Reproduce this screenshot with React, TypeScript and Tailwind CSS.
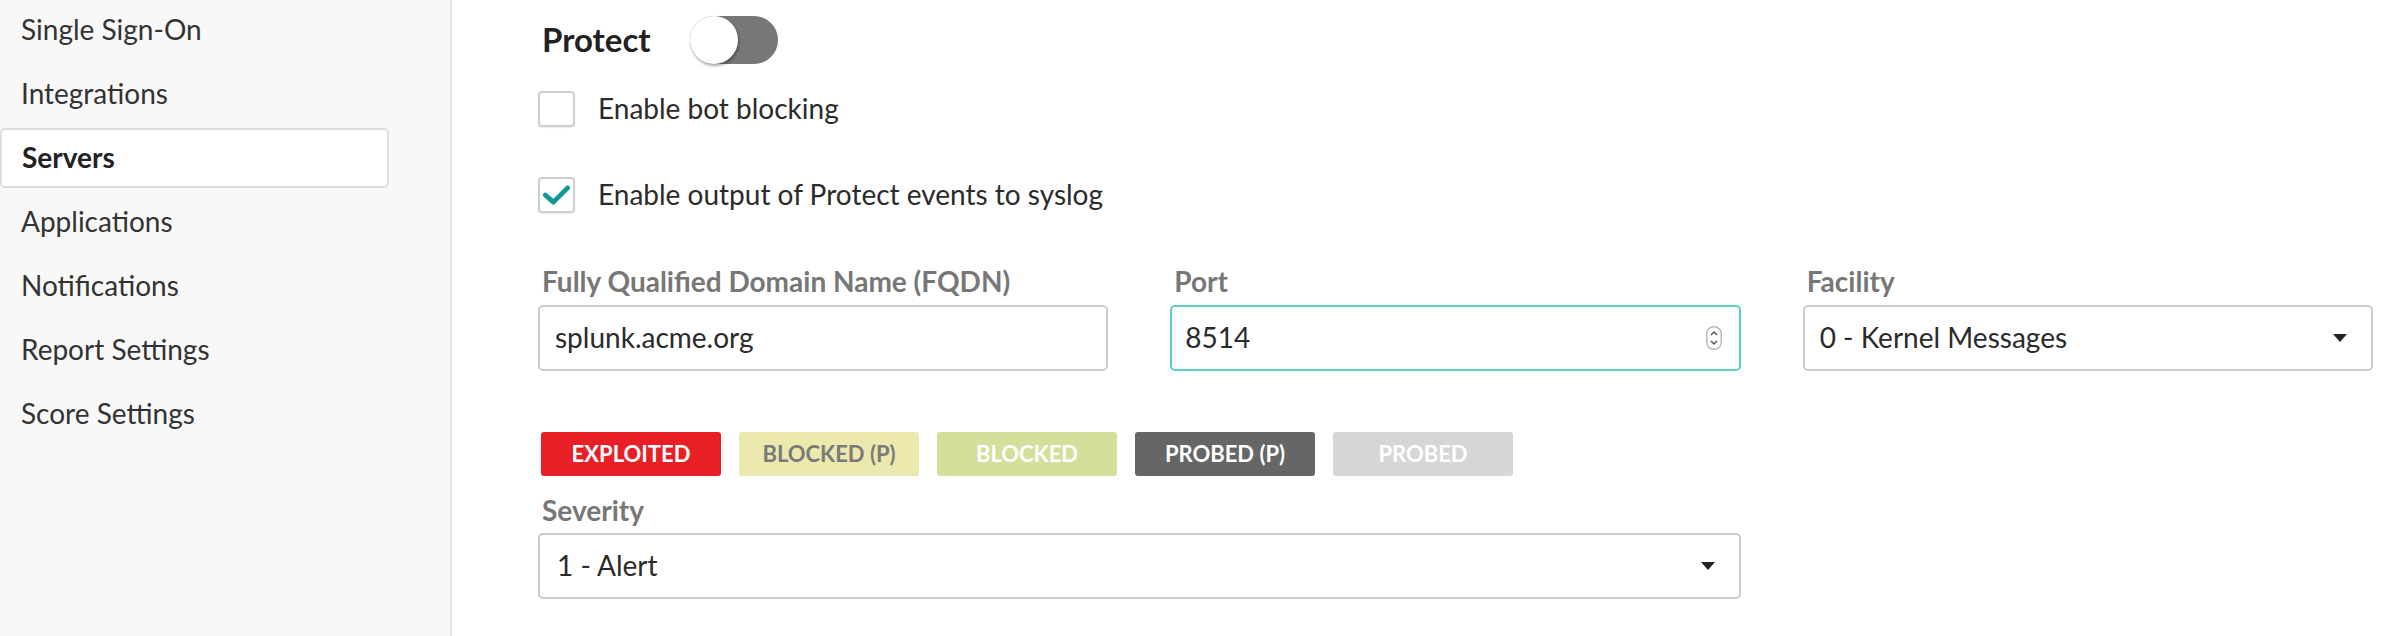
import { ReactElement } from 'react';

const navItems = [
  'Single Sign-On',
  'Integrations',
  'Servers',
  'Applications',
  'Notifications',
  'Report Settings',
  'Score Settings',
];

const tags = [
  { label: 'EXPLOITED', cls: 'bg-[#e81f27] text-white' },
  { label: 'BLOCKED (P)', cls: 'bg-[#ebe9ad] text-[#7a7a7a]' },
  { label: 'BLOCKED', cls: 'bg-[#d2e09b] text-white' },
  { label: 'PROBED (P)', cls: 'bg-[#666666] text-white' },
  { label: 'PROBED', cls: 'bg-[#d6d6d6] text-white' },
];

function Caret(): ReactElement {
  return (
    <svg width="14" height="8" viewBox="0 0 14 8" className="shrink-0">
      <path d="M0 0 L14 0 L7 8 Z" fill="#222" />
    </svg>
  );
}

function Checkbox({ checked }: { checked: boolean }): ReactElement {
  return (
    <div className="w-[37px] h-[36px] shrink-0 rounded-[4px] border-2 border-[#cfcfcf] bg-white shadow-[0_1px_1px_rgba(0,0,0,0.08)] flex items-center justify-center">
      {checked && (
        <svg width="37" height="36" viewBox="0 0 37 36">
          <path
            d="M6 18 L15 26 L31 10"
            fill="none"
            stroke="#12979b"
            strokeWidth="5.5"
            strokeLinecap="round"
            strokeLinejoin="round"
          />
        </svg>
      )}
    </div>
  );
}

function Field({
  label,
  children,
  className = '',
}: {
  label: string;
  children: React.ReactNode;
  className?: string;
}): ReactElement {
  return (
    <div className={`flex flex-col gap-[6px] ${className}`}>
      <span className="text-[28px] leading-[1.2] font-bold text-[#777777] pl-[4px]">{label}</span>
      {children}
    </div>
  );
}

export default function App(): ReactElement {
  return (
    <div className="flex h-[636px] bg-white text-[#2b2b2b] font-['Lato','Noto_Sans',sans-serif]">
      <aside className="w-[452px] shrink-0 bg-[#f8f8f8] border-r-2 border-[#e6e6e6] pr-[61px] flex flex-col gap-[4px]">
        {navItems.map((item) =>
          item === 'Servers' ? (
            <div
              key={item}
              className="h-[60px] flex items-center pl-[20px] bg-white border-2 border-[#dedede] rounded-[5px] text-[28px] leading-[1.2] font-bold text-[#222]"
            >
              {item}
            </div>
          ) : (
            <div key={item} className="h-[60px] flex items-center pl-[21px] text-[28px] leading-[1.2] text-[#333]">
              {item}
            </div>
          )
        )}
      </aside>

      <main className="flex-1 pl-[86px] pr-[29px] pt-[16px]">
        <div className="flex items-center h-[48px]">
          <h2 className="text-[33px] leading-[1.2] font-bold text-[#222] pl-[4px]">Protect</h2>
          <div className="ml-[39px] w-[88px] h-[48px] rounded-full bg-[#777777] flex items-center">
            <div className="w-[48px] h-[48px] rounded-full bg-white shadow-[1px_2px_3px_rgba(0,0,0,0.35)]" />
          </div>
        </div>

        <label className="mt-[27px] flex items-center gap-[23px]">
          <Checkbox checked={false} />
          <span className="text-[28px] leading-[1.2]">Enable bot blocking</span>
        </label>

        <label className="mt-[50px] flex items-center gap-[23px]">
          <Checkbox checked />
          <span className="text-[28px] leading-[1.2]">Enable output of Protect events to syslog</span>
        </label>

        <div className="mt-[52px] grid grid-cols-3 gap-x-[62px]">
          <Field label="Fully Qualified Domain Name (FQDN)">
            <div className="h-[66px] rounded-[5px] border-2 border-[#cccccc] bg-white flex items-center px-[15px] text-[28px] leading-[1.2]">
              splunk.acme.org
            </div>
          </Field>
          <Field label="Port">
            <div className="h-[66px] rounded-[5px] border-2 border-[#5ccfbf] bg-white flex items-center justify-between pl-[13px] pr-[17px] text-[28px] leading-[1.2]">
              <span>8514</span>
              <svg width="16" height="24" viewBox="0 0 16 24">
                <rect x="0.75" y="0.75" width="14.5" height="22.5" rx="7" fill="#fff" stroke="#bbbbbb" strokeWidth="1.5" />
                <path d="M5 9 L8 6 L11 9" fill="none" stroke="#555" strokeWidth="1.5" />
                <path d="M5 15 L8 18 L11 15" fill="none" stroke="#555" strokeWidth="1.5" />
              </svg>
            </div>
          </Field>
          <Field label="Facility">
            <div className="h-[66px] rounded-[5px] border-2 border-[#cccccc] bg-white flex items-center justify-between pl-[15px] pr-[24px] text-[28px] leading-[1.2]">
              <span>0 - Kernel Messages</span>
              <Caret />
            </div>
          </Field>
        </div>

        <div className="mt-[61px] flex gap-[18px] pl-[3px]">
          {tags.map((t) => (
            <div
              key={t.label}
              className={`w-[180px] h-[44px] rounded-[3px] flex items-center justify-center text-[22px] leading-none font-bold ${t.cls}`}
            >
              {t.label}
            </div>
          ))}
        </div>

        <div className="mt-[18px] grid grid-cols-3 gap-x-[62px]">
          <Field label="Severity" className="col-span-2">
            <div className="h-[66px] rounded-[5px] border-2 border-[#cccccc] bg-white flex items-center justify-between pl-[17px] pr-[24px] text-[28px] leading-[1.2]">
              <span>1 - Alert</span>
              <Caret />
            </div>
          </Field>
        </div>
      </main>
    </div>
  );
}
